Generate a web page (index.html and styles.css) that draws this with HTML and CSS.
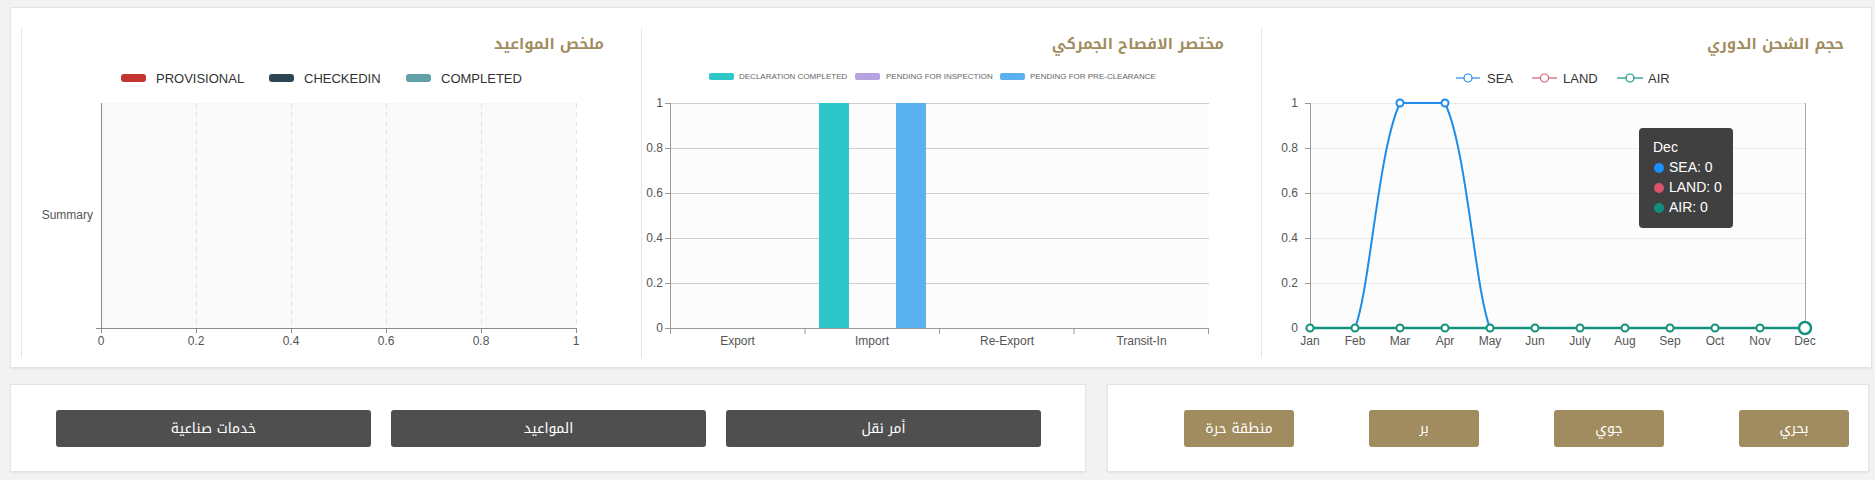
FILE: index.html
```html
<!DOCTYPE html>
<html lang="ar" dir="rtl">
<head>
<meta charset="utf-8">
<title>لوحة التحكم</title>
<link rel="stylesheet" href="styles.css">
</head>
<body>
<div class="page">
  <section class="panel charts">
    <div class="chart-col">
      <h3 class="chart-title">حجم الشحن الدوري</h3>
      <div class="chart-box">
        <svg class="chart" width="619" height="298" viewBox="0 0 619 298">
          <g class="legend-13">
            <line x1="194" y1="18" x2="218" y2="18" stroke="#1f8ceb" stroke-width="1.2"/>
            <circle cx="206" cy="18" r="4" fill="#fff" stroke="#1f8ceb" stroke-width="1.2"/>
            <text x="225" y="22.5">SEA</text>
            <line x1="270" y1="18" x2="295" y2="18" stroke="#d75a6e" stroke-width="1.2"/>
            <circle cx="282.5" cy="18" r="4" fill="#fff" stroke="#d75a6e" stroke-width="1.2"/>
            <text x="301" y="22.5">LAND</text>
            <line x1="355" y1="18" x2="381" y2="18" stroke="#14917f" stroke-width="1.2"/>
            <circle cx="368" cy="18" r="4" fill="#fff" stroke="#14917f" stroke-width="1.2"/>
            <text x="386" y="22.5">AIR</text>
          </g>
          <rect x="48" y="43" width="495" height="225" fill="#fcfcfc"/>
          <g stroke="#ececec" stroke-width="1">
            <line x1="48" y1="43.5" x2="543" y2="43.5"/>
            <line x1="48" y1="88.5" x2="543" y2="88.5"/>
            <line x1="48" y1="133.5" x2="543" y2="133.5"/>
            <line x1="48" y1="178.5" x2="543" y2="178.5"/>
            <line x1="48" y1="223.5" x2="543" y2="223.5"/>
          </g>
          <line x1="543.5" y1="43" x2="543.5" y2="268" stroke="#a8a8a8"/>
          <g stroke="#999">
            <line x1="48.5" y1="43" x2="48.5" y2="268"/>
            <line x1="43" y1="43.5" x2="48" y2="43.5"/>
            <line x1="43" y1="88.5" x2="48" y2="88.5"/>
            <line x1="43" y1="133.5" x2="48" y2="133.5"/>
            <line x1="43" y1="178.5" x2="48" y2="178.5"/>
            <line x1="43" y1="223.5" x2="48" y2="223.5"/>
            <line x1="43" y1="268.5" x2="48" y2="268.5"/>
          </g>
          <g class="axis-label" text-anchor="end">
            <text x="36" y="47">1</text>
            <text x="36" y="92">0.8</text>
            <text x="36" y="137">0.6</text>
            <text x="36" y="182">0.4</text>
            <text x="36" y="227">0.2</text>
            <text x="36" y="272">0</text>
          </g>
          <g class="axis-label" text-anchor="middle">
            <text x="48" y="285">Jan</text>
            <text x="93" y="285">Feb</text>
            <text x="138" y="285">Mar</text>
            <text x="183" y="285">Apr</text>
            <text x="228" y="285">May</text>
            <text x="273" y="285">Jun</text>
            <text x="318" y="285">July</text>
            <text x="363" y="285">Aug</text>
            <text x="408" y="285">Sep</text>
            <text x="453" y="285">Oct</text>
            <text x="498" y="285">Nov</text>
            <text x="543" y="285">Dec</text>
          </g>
          <path d="M48,268 L93,268 C108,230 116,90 138,43 L183,43 C205,90 213,230 228,268 L543,268" fill="none" stroke="#1f8ceb" stroke-width="2"/>
          <line x1="48" y1="268" x2="543" y2="268" stroke="#d75a6e" stroke-width="2"/>
          <line x1="48" y1="268" x2="543" y2="268" stroke="#14917f" stroke-width="2.5"/>
          <g fill="#fff" stroke="#1f8ceb" stroke-width="2">
            <circle cx="138" cy="43" r="3.5"/>
            <circle cx="183" cy="43" r="3.5"/>
          </g>
          <g fill="#fff" stroke="#14917f" stroke-width="2">
            <circle cx="48" cy="268" r="3.5"/>
            <circle cx="93" cy="268" r="3.5"/>
            <circle cx="138" cy="268" r="3.5"/>
            <circle cx="183" cy="268" r="3.5"/>
            <circle cx="228" cy="268" r="3.5"/>
            <circle cx="273" cy="268" r="3.5"/>
            <circle cx="318" cy="268" r="3.5"/>
            <circle cx="363" cy="268" r="3.5"/>
            <circle cx="408" cy="268" r="3.5"/>
            <circle cx="453" cy="268" r="3.5"/>
            <circle cx="498" cy="268" r="3.5"/>
            <circle cx="543" cy="268" r="6" stroke-width="2.5"/>
          </g>
        </svg>
        <div class="tooltip">
          <div>Dec</div>
          <div><span class="dot dot-sea"></span>SEA: 0</div>
          <div><span class="dot dot-land"></span>LAND: 0</div>
          <div><span class="dot dot-air"></span>AIR: 0</div>
        </div>
      </div>
    </div>

    <div class="chart-col">
      <h3 class="chart-title">مختصر الافصاح الجمركي</h3>
      <div class="chart-box">
        <svg class="chart" width="619" height="298" viewBox="0 0 619 298">
          <g class="legend-8">
            <rect x="67" y="13" width="25" height="7" rx="2" fill="#2ec7c9"/>
            <text x="97" y="19">DECLARATION COMPLETED</text>
            <rect x="213" y="13" width="25" height="7" rx="2" fill="#b6a2de"/>
            <text x="244" y="19">PENDING FOR INSPECTION</text>
            <rect x="358" y="13" width="25" height="7" rx="2" fill="#5ab1ef"/>
            <text x="388" y="19">PENDING FOR PRE-CLEARANCE</text>
          </g>
          <rect x="28" y="43" width="539" height="225" fill="#fcfcfc"/>
          <g stroke="#cfcfcf">
            <line x1="28" y1="43.5" x2="567" y2="43.5"/>
            <line x1="28" y1="88.5" x2="567" y2="88.5"/>
            <line x1="28" y1="133.5" x2="567" y2="133.5"/>
            <line x1="28" y1="178.5" x2="567" y2="178.5"/>
            <line x1="28" y1="223.5" x2="567" y2="223.5"/>
          </g>
          <g stroke="#999">
            <line x1="28.5" y1="43" x2="28.5" y2="268"/>
            <line x1="28" y1="268.5" x2="567" y2="268.5"/>
            <line x1="23" y1="43.5" x2="28" y2="43.5"/>
            <line x1="23" y1="88.5" x2="28" y2="88.5"/>
            <line x1="23" y1="133.5" x2="28" y2="133.5"/>
            <line x1="23" y1="178.5" x2="28" y2="178.5"/>
            <line x1="23" y1="223.5" x2="28" y2="223.5"/>
            <line x1="23" y1="268.5" x2="28" y2="268.5"/>
            <line x1="28.5" y1="268" x2="28.5" y2="274"/>
            <line x1="163" y1="268" x2="163" y2="274"/>
            <line x1="297.5" y1="268" x2="297.5" y2="274"/>
            <line x1="432" y1="268" x2="432" y2="274"/>
            <line x1="566.5" y1="268" x2="566.5" y2="274"/>
          </g>
          <g class="axis-label" text-anchor="end">
            <text x="21" y="47">1</text>
            <text x="21" y="92">0.8</text>
            <text x="21" y="137">0.6</text>
            <text x="21" y="182">0.4</text>
            <text x="21" y="227">0.2</text>
            <text x="21" y="272">0</text>
          </g>
          <g class="axis-label" text-anchor="middle">
            <text x="95.5" y="285">Export</text>
            <text x="230" y="285">Import</text>
            <text x="365" y="285">Re-Export</text>
            <text x="499.5" y="285">Transit-In</text>
          </g>
          <rect x="177" y="43" width="30" height="225" fill="#2ec7c9"/>
          <rect x="254" y="43" width="30" height="225" fill="#5ab1ef"/>
        </svg>
      </div>
    </div>

    <div class="chart-col">
      <h3 class="chart-title">ملخص المواعيد</h3>
      <div class="chart-box">
        <svg class="chart" width="619" height="298" viewBox="0 0 619 298">
          <g class="legend-13">
            <rect x="99" y="14" width="25" height="8" rx="3" fill="#c23531"/>
            <text x="134" y="22.5">PROVISIONAL</text>
            <rect x="247" y="14" width="25" height="8" rx="3" fill="#2f4554"/>
            <text x="282" y="22.5">CHECKEDIN</text>
            <rect x="384" y="14" width="25" height="8" rx="3" fill="#61a0a8"/>
            <text x="419" y="22.5">COMPLETED</text>
          </g>
          <rect x="79" y="43" width="475" height="225" fill="#f9f9f9"/>
          <g stroke="#e2e2e2" stroke-dasharray="5 4">
            <line x1="174.5" y1="43" x2="174.5" y2="268"/>
            <line x1="269.5" y1="43" x2="269.5" y2="268"/>
            <line x1="364.5" y1="43" x2="364.5" y2="268"/>
            <line x1="459.5" y1="43" x2="459.5" y2="268"/>
            <line x1="554.5" y1="43" x2="554.5" y2="268"/>
          </g>
          <g stroke="#8c8c8c">
            <line x1="79.5" y1="43" x2="79.5" y2="268"/>
            <line x1="74" y1="268.5" x2="555" y2="268.5"/>
            <line x1="79.5" y1="268" x2="79.5" y2="273"/>
            <line x1="174.5" y1="268" x2="174.5" y2="273"/>
            <line x1="269.5" y1="268" x2="269.5" y2="273"/>
            <line x1="364.5" y1="268" x2="364.5" y2="273"/>
            <line x1="459.5" y1="268" x2="459.5" y2="273"/>
            <line x1="554.5" y1="268" x2="554.5" y2="273"/>
          </g>
          <g class="axis-label" text-anchor="middle">
            <text x="79" y="285">0</text>
            <text x="174" y="285">0.2</text>
            <text x="269" y="285">0.4</text>
            <text x="364" y="285">0.6</text>
            <text x="459" y="285">0.8</text>
            <text x="554" y="285">1</text>
          </g>
          <text class="axis-label" x="71" y="159" text-anchor="end">Summary</text>
        </svg>
      </div>
    </div>
  </section>

  <div class="actions">
    <section class="panel modes">
      <a class="btn btn-gold">بحري</a>
      <a class="btn btn-gold">جوي</a>
      <a class="btn btn-gold">بر</a>
      <a class="btn btn-gold">منطقة حرة</a>
    </section>
    <section class="panel services">
      <a class="btn btn-dark">أمر نقل</a>
      <a class="btn btn-dark">المواعيد</a>
      <a class="btn btn-dark">خدمات صناعية</a>
    </section>
  </div>
</div>
</body>
</html>
```

FILE: styles.css
```css
html, body {
  margin: 0;
  padding: 0;
  background: #f3f3f3;
}

body {
  width: 1875px;
  height: 480px;
  overflow: hidden;
  font-family: "Liberation Sans", Arial, sans-serif;
}

.page {
  padding: 7px 3px 0 10px;
}

.panel {
  background: #fff;
  border: 1px solid #e3e3e3;
  box-shadow: 0 1px 2px rgba(0, 0, 0, 0.07);
  box-sizing: border-box;
}

/* Charts panel */
.charts {
  display: flex;
  justify-content: flex-end;
  height: 361px;
  padding: 20px 0 9px 10px;
  overflow: hidden;
}

.chart-col {
  flex: none;
  width: 620px;
  height: 330px;
  box-sizing: border-box;
  border-left: 1px solid #e6e6e6;
}

.chart-title {
  margin: 0;
  height: 32px;
  padding-right: 37px;
  line-height: 32px;
  font-family: "Noto Kufi Arabic", "Noto Sans Arabic", "DejaVu Sans", sans-serif;
  font-size: 15px;
  font-weight: bold;
  color: #a08c5e;
  text-align: right;
}

.chart-box {
  position: relative;
  height: 298px;
}

.chart {
  display: block;
  direction: ltr;
  font-family: "Liberation Sans", Arial, sans-serif;
}

.legend-13 text {
  font-size: 13px;
  fill: #333;
}

.legend-8 text {
  font-size: 8px;
  fill: #666;
}

.axis-label,
.axis-label text {
  font-size: 12px;
  fill: #555;
}

/* Tooltip */
.tooltip {
  position: absolute;
  left: 377px;
  top: 68px;
  width: 94px;
  height: 100px;
  box-sizing: border-box;
  padding: 9px 14px;
  background: rgba(50, 50, 50, 0.93);
  border-radius: 4px;
  color: #fff;
  font-family: "Liberation Sans", Arial, sans-serif;
  font-size: 14px;
  line-height: 20px;
  direction: ltr;
  text-align: left;
  white-space: nowrap;
}

.dot {
  display: inline-block;
  width: 10px;
  height: 10px;
  margin: 0 5px 0 1px;
  border-radius: 50%;
  vertical-align: -1px;
}

.dot-sea { background: #1890ff; }
.dot-land { background: #d9536b; }
.dot-air { background: #0f8f7f; }

/* Action rows */
.actions {
  display: flex;
  gap: 21px;
  margin-top: 16px;
  margin-right: 3px;
}

.modes,
.services {
  display: flex;
  align-items: center;
  height: 88px;
}

.modes {
  width: 762px;
  gap: 75px;
  padding-right: 19px;
}

.services {
  width: 1076px;
  gap: 20px;
  padding: 0 44px;
}

.btn {
  display: flex;
  align-items: center;
  justify-content: center;
  flex: none;
  height: 37px;
  border-radius: 3px;
  color: #fff;
  font-family: "Noto Kufi Arabic", "Noto Sans Arabic", "DejaVu Sans", sans-serif;
  font-size: 14px;
  text-decoration: none;
  cursor: pointer;
}

.btn-gold {
  width: 110px;
  background: #a08c5e;
}

.btn-dark {
  width: 315px;
  background: #4f4f50;
}
```
